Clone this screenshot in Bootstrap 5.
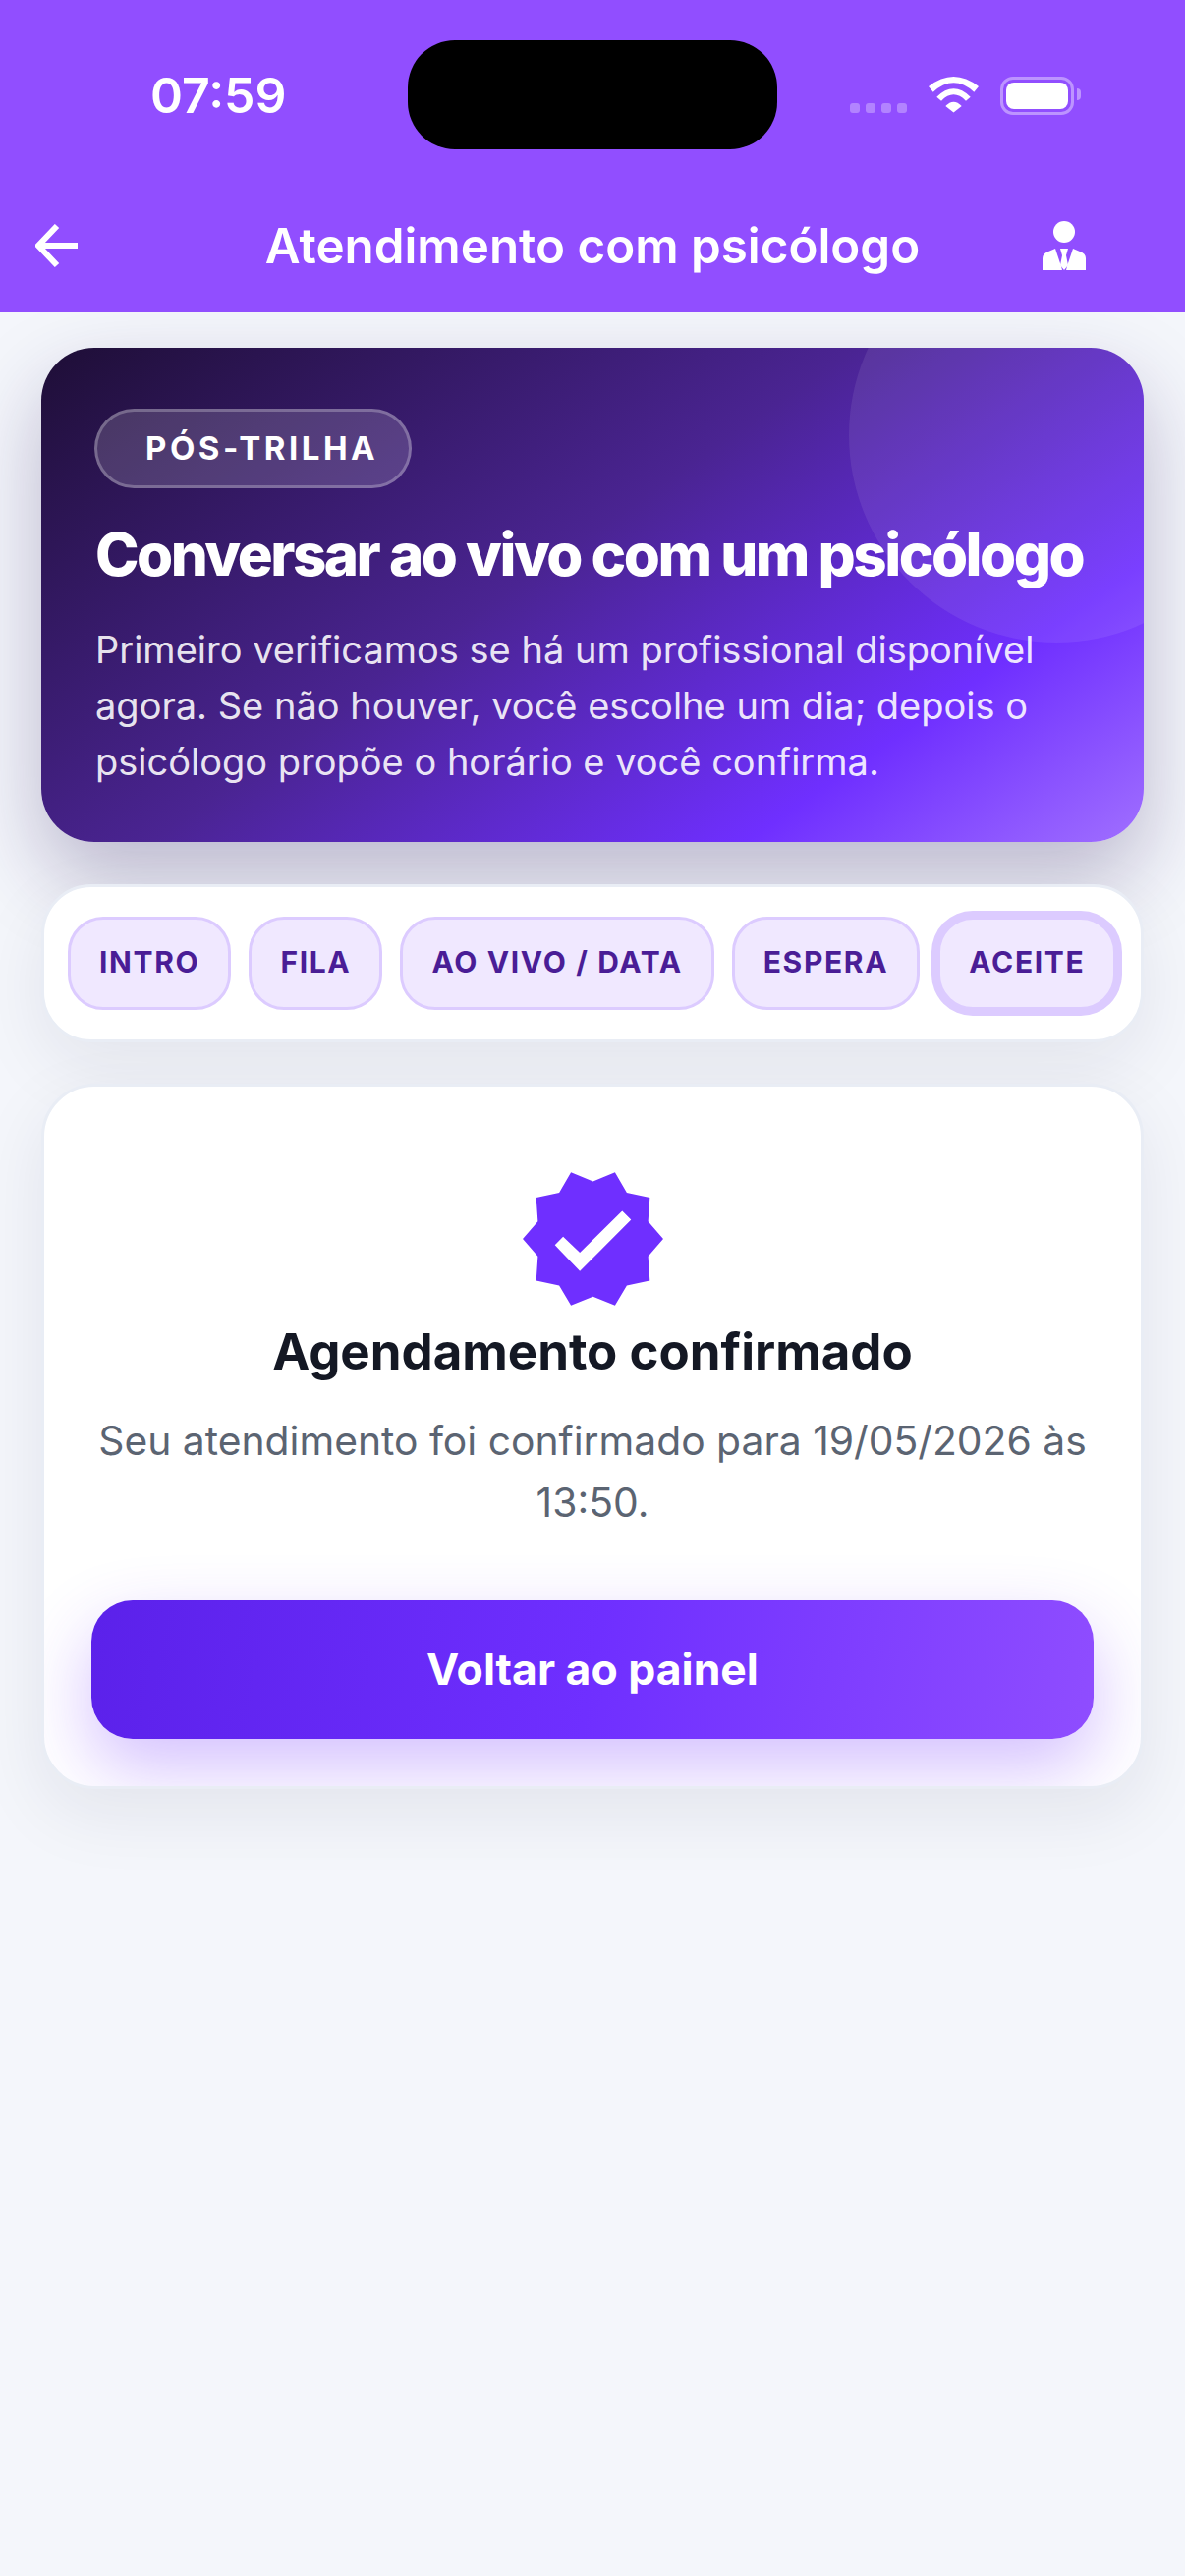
<!DOCTYPE html>
<html lang="pt-BR">
<head>
    <meta charset="UTF-8">
    <meta name="viewport" content="width=device-width, initial-scale=1.0">
    <title>Atendimento com psicólogo</title>
    <link href="https://cdn.jsdelivr.net/npm/bootstrap@5.3.0/dist/css/bootstrap.min.css" rel="stylesheet">
    <style>
        body {
            background-color: #f4f6fb;
            font-family: Inter, "Liberation Sans", sans-serif;
            min-height: 2622px;
        }
        .top-header {
            background-color: #914eff;
            height: 318px;
            color: #fff;
            position: relative;
            z-index: 2;
        }
        .status-row {
            padding-top: 41px;
            height: 152px;
        }
        .status-left {
            width: 415px;
            padding-left: 153px;
            padding-top: 24px;
            font-size: 50px;
            font-weight: 600;
            line-height: 64px;
        }
        .island {
            width: 376px;
            height: 111px;
            background-color: #000;
            border-radius: 48px;
        }
        .status-right {
            padding-left: 74px;
            padding-top: 37px;
            gap: 22px;
        }
        .signal-dots {
            gap: 6px;
            padding-top: 27px;
        }
        .signal-dots span {
            width: 10px;
            height: 10px;
            border-radius: 3px;
            background-color: rgba(255, 255, 255, .3);
        }
        .batt {
            width: 75px;
            height: 39px;
            border: 3px solid rgba(255, 255, 255, .4);
            border-radius: 13px;
            padding: 3px;
            position: relative;
        }
        .batt i {
            display: block;
            height: 100%;
            background-color: #fff;
            border-radius: 8px;
        }
        .batt::after {
            content: "";
            position: absolute;
            right: -10px;
            top: 9px;
            width: 4px;
            height: 12px;
            background-color: rgba(255, 255, 255, .4);
            border-radius: 0 4px 4px 0;
        }
        .nav-row {
            padding: 0 36px;
            height: 66px;
            margin-top: 65px;
        }
        .nav-side {
            flex: 1 1 0;
        }
        .nav-side-end svg {
            margin-right: 65px;
        }
        .nav-title {
            font-size: 49.3px;
            font-weight: 600;
            line-height: 66px;
            margin: 0;
            white-space: nowrap;
        }
        .page-body {
            padding: 36px 42px 0;
        }
        .hero-box {
            background: linear-gradient(145deg, #1e0e36 0%, #4a2492 45%, #6f2fff 78%, #a06fff 100%);
            border-radius: 54px;
            height: 503px;
            padding: 62px 30px 0 55px;
            color: #fff;
            position: relative;
            overflow: hidden;
        }
        .hero-shadow {
            box-shadow: 0 36px 84px rgba(40, 20, 90, .28);
            border-radius: 54px;
        }
        .hero-circle {
            position: absolute;
            width: 422px;
            height: 422px;
            left: 822px;
            top: -122px;
            border-radius: 50%;
            background-color: rgba(255, 255, 255, .08);
        }
        .hero-tag {
            display: inline-block;
            position: relative;
            height: 81px;
            line-height: 75px;
            margin-left: -1px;
            padding: 0 31px 0 49px;
            font-size: 33px;
            font-weight: 700;
            letter-spacing: 3.5px;
            background-color: rgba(255, 255, 255, .16);
            border: 3px solid rgba(255, 255, 255, .25);
            border-radius: 41px;
        }
        .hero-title {
            position: relative;
            font-size: 60px;
            font-weight: 800;
            letter-spacing: -2.5px;
            line-height: 72px;
            margin: 31px 0 0;
            white-space: nowrap;
        }
        .hero-text {
            position: relative;
            font-size: 38px;
            line-height: 57px;
            margin: 33px 0 0;
            padding-right: 20px;
            color: rgba(255, 255, 255, .9);
        }
        .white-box {
            background-color: #fff;
            border: 3px solid #e9edf5;
            box-shadow: 0 24px 72px rgba(20, 30, 70, .08);
        }
        .tabs-box {
            margin-top: 43px;
            border-radius: 51px;
            padding: 30px 24px;
            gap: 18px;
        }
        .step-pill {
            height: 95px;
            padding: 0 29px 2px;
            border: 3px solid #dccbff;
            background-color: #f0e8ff;
            color: #4a1d96;
            border-radius: 36px;
            font-size: 30px;
            font-weight: 700;
            letter-spacing: 1.65px;
            white-space: nowrap;
        }
        .step-pill.is-current {
            box-shadow: 0 0 0 6px #dccbff;
        }
        .done-box {
            margin-top: 42px;
            border-radius: 54px;
            padding: 87px 48px 48px;
            text-align: center;
            overflow: hidden;
        }
        .done-icon {
            display: block;
            width: 143px;
            height: 136px;
            margin: 0 auto;
        }
        .done-title {
            font-size: 51px;
            font-weight: 700;
            line-height: 62px;
            color: #141824;
            margin: 16px 0 0;
        }
        .done-text {
            font-size: 40.8px;
            line-height: 63px;
            color: #5b6472;
            margin: 28px 0 0;
        }
        .back-btn {
            display: block;
            width: 100%;
            height: 141px;
            margin-top: 68px;
            border: 0;
            border-radius: 42px;
            background: linear-gradient(100deg, #5b21ea 0%, #6f2fff 50%, #8f4dff 100%);
            color: #fff;
            font-size: 44.5px;
            font-weight: 700;
            box-shadow: 0 30px 72px rgba(111, 47, 255, .3);
        }
    </style>
</head>
<body>

<header class="top-header">
    <div class="status-row d-flex">
        <div class="status-left">07:59</div>
        <div class="island"></div>
        <div class="status-right d-flex align-items-start">
            <div class="signal-dots d-flex">
                <span></span><span></span><span></span><span></span>
            </div>
            <svg width="51" height="37" viewBox="0 0 51 37" fill="#fff">
                <path d="M0 10Q25.5 -10 51 10L46.3 15.7Q25.5 -3 4.7 15.7Z"/>
                <path d="M8.3 20.7Q25.5 3.9 42.7 20.7L38 24.7Q25.5 12 13 24.7Z"/>
                <path d="M17.3 30Q25.5 21.4 33.7 30L25.5 36.5Z"/>
            </svg>
            <div class="batt"><i></i></div>
        </div>
    </div>
    <div class="nav-row d-flex align-items-center">
        <div class="nav-side d-flex">
            <svg width="43" height="44" viewBox="0 0 43 44" fill="none" stroke="#fff" stroke-width="6">
                <path d="M43 22H4"/>
                <path d="M22 2L3 22L22 42"/>
            </svg>
        </div>
        <h1 class="nav-title">Atendimento com psicólogo</h1>
        <div class="nav-side nav-side-end d-flex justify-content-end">
            <svg width="44" height="50" viewBox="0 0 44 50" fill="#fff">
                <circle cx="22" cy="11" r="11"/>
                <path d="M0 50V38Q0 33 6 31L13 28L19 46L20 50Z"/>
                <path d="M44 50V38Q44 33 38 31L31 28L25 46L24 50Z"/>
                <path d="M18 28H26L24 35L26 45L22 50L18 45L20 35Z"/>
            </svg>
        </div>
    </div>
</header>

<main class="page-body">
    <div class="hero-shadow">
        <section class="hero-box">
            <div class="hero-circle"></div>
            <span class="hero-tag">PÓS-TRILHA</span>
            <h2 class="hero-title">Conversar ao vivo com um psicólogo</h2>
            <p class="hero-text">Primeiro verificamos se há um profissional disponível agora. Se não houver, você escolhe um dia; depois o psicólogo propõe o horário e você confirma.</p>
        </section>
    </div>

    <div class="white-box tabs-box d-flex">
        <div class="step-pill d-flex align-items-center">INTRO</div>
        <div class="step-pill d-flex align-items-center">FILA</div>
        <div class="step-pill d-flex align-items-center">AO VIVO / DATA</div>
        <div class="step-pill d-flex align-items-center">ESPERA</div>
        <div class="step-pill is-current d-flex align-items-center">ACEITE</div>
    </div>

    <section class="white-box done-box">
        <svg class="done-icon" viewBox="155 68 428 406">
            <polygon fill="#6f2fff" points="302,68 369,96 436,68 472,130 542,145 537,218 583,271 537,324 542,398 472,413 436,474 369,447 302,474 266,413 196,398 201,324 155,271 201,218 196,145 266,130"/>
            <polygon fill="#fff" points="253,290 278,264 329,313 458,186 485,213 329,369"/>
        </svg>
        <h3 class="done-title">Agendamento confirmado</h3>
        <p class="done-text">Seu atendimento foi confirmado para 19/05/2026 às 13:50.</p>
        <button type="button" class="btn back-btn">Voltar ao painel</button>
    </section>
</main>

<script src="https://cdn.jsdelivr.net/npm/bootstrap@5.3.0/dist/js/bootstrap.bundle.min.js"></script>

</body>
</html>
